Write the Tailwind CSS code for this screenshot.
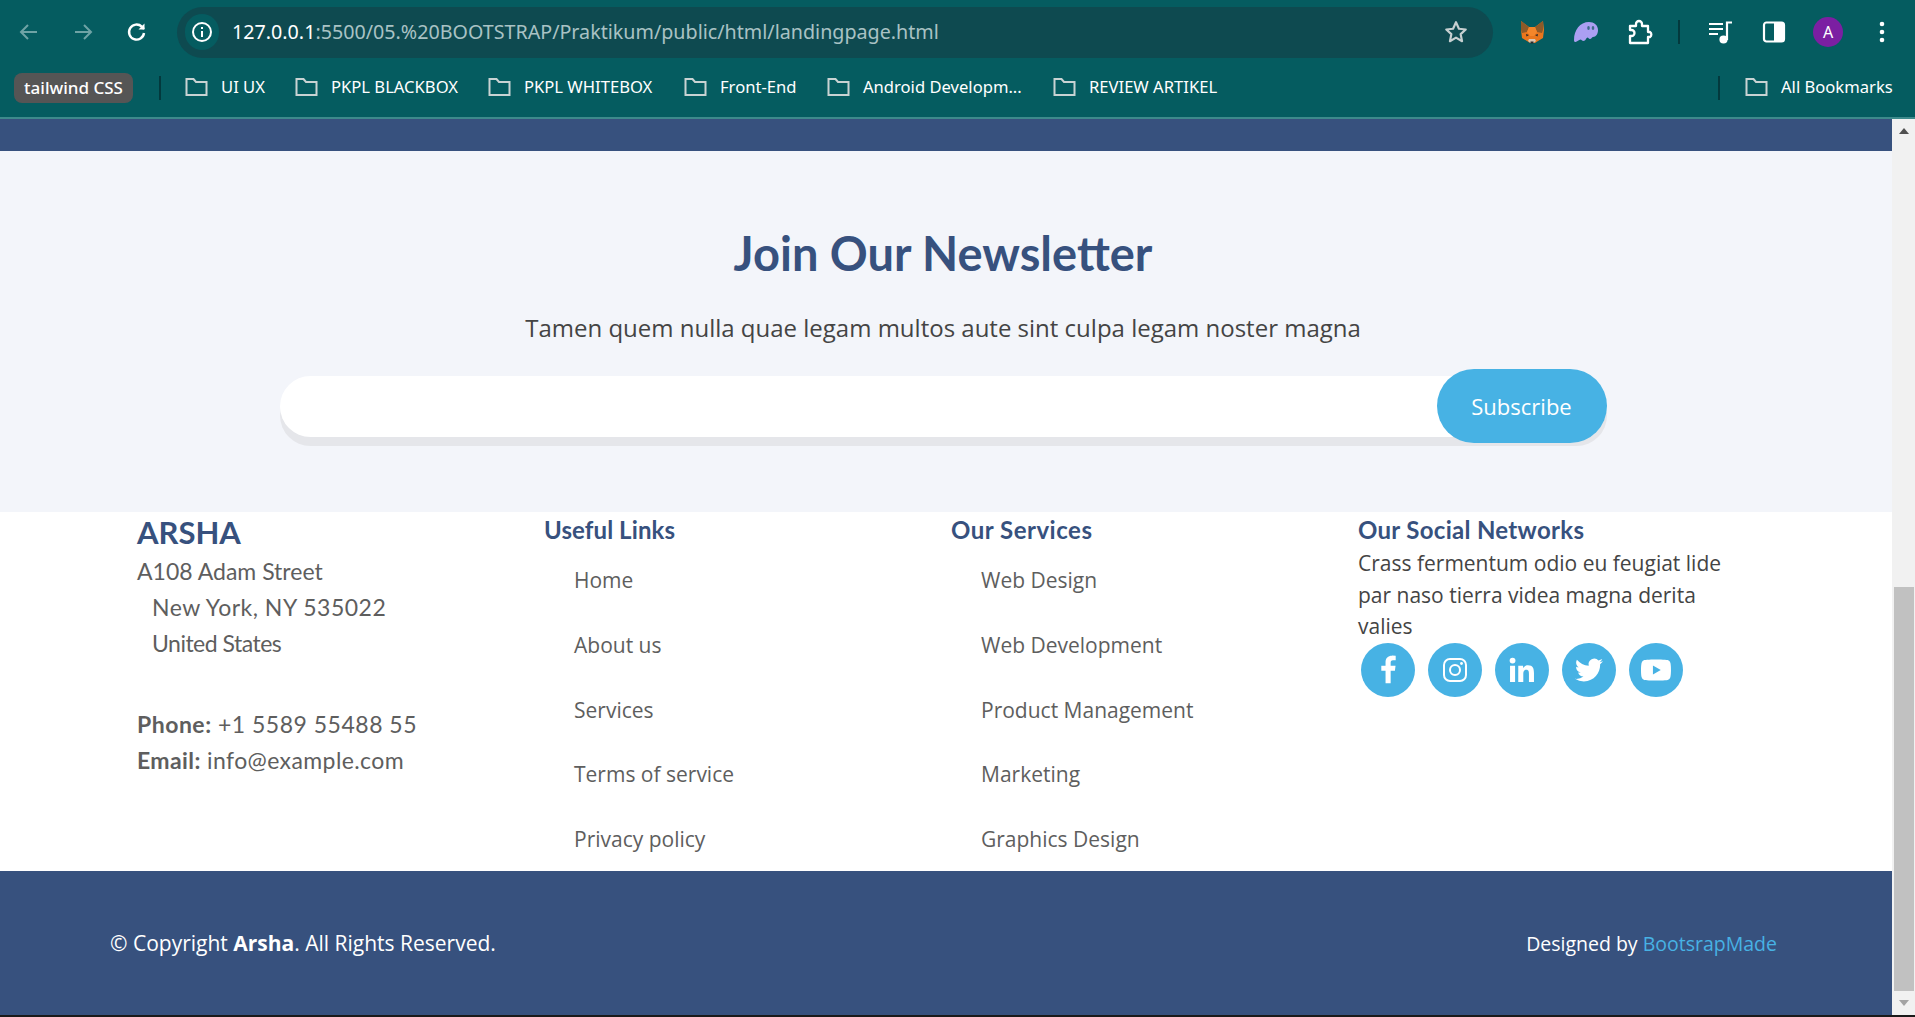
<!DOCTYPE html>
<html>
<head>
<meta charset="UTF-8">
<title>landingpage</title>
<script src="https://cdn.jsdelivr.net/npm/@tailwindcss/browser@4"></script>
</head>
<body class="bg-[#1a1a1a] font-['Open_Sans',sans-serif]">
<div class="h-[1015px] w-[1915px] flex flex-col overflow-hidden">

  <!-- browser chrome -->
  <div class="h-[119px] bg-[#055c60] border-b-2 border-[#3e8a8c] text-white font-['Noto_Sans',sans-serif] shrink-0">
    <div class="h-[64px] flex items-center pl-[2px]">
      <div class="w-[54px] flex justify-center text-[#6fa3a5]">
        <svg class="w-[24px] h-[24px]" viewBox="0 0 24 24" fill="none" stroke="currentColor" stroke-width="2"><path d="M20 12H5M11 5l-7 7 7 7"/></svg>
      </div>
      <div class="w-[54px] flex justify-center text-[#6fa3a5]">
        <svg class="w-[24px] h-[24px]" viewBox="0 0 24 24" fill="none" stroke="currentColor" stroke-width="2"><path d="M4 12h15M13 5l7 7-7 7"/></svg>
      </div>
      <div class="w-[54px] flex justify-center text-white">
        <svg class="w-[24px] h-[24px]" viewBox="0 0 24 24" fill="none" stroke="currentColor" stroke-width="2.4"><path d="M19 13a7.5 7.5 0 1 1-2.2-6.3L19 9"/><path d="M19.5 3.5V9.5H13.5" fill="currentColor" stroke="none"/></svg>
      </div>
      <div class="ml-[13px] w-[1316px] h-[51px] rounded-full bg-[#0e4a50] flex items-center pl-[8px] pr-[24px]">
        <div class="w-[34px] h-[36px] rounded-full bg-[#055c60] flex items-center justify-center">
          <svg class="w-[24px] h-[24px]" viewBox="0 0 24 24" fill="none" stroke="#fff" stroke-width="2"><circle cx="12" cy="12" r="9"/><path d="M12 11v6M12 7v2"/></svg>
        </div>
        <div class="ml-[13px] text-[19.7px] leading-none flex-1 whitespace-nowrap text-[#a9c2c4]"><span class="text-white">127.0.0.1</span>:5500/05.%20BOOTSTRAP/Praktikum/public/html/landingpage.html</div>
        <svg class="w-[26px] h-[26px]" viewBox="0 0 24 24" fill="none" stroke="#c6cfd0" stroke-width="2" stroke-linejoin="round"><path d="M12 3l2.700 6 6.300.7-4.700 4.300 1.300 6.500L12 17.200l-5.600 3.300 1.300-6.500L3 9.700 9.300 9z"/></svg>
      </div>
      <div class="ml-[12px] w-[54px] flex justify-center">
        <svg class="w-[24px] h-[24px]" viewBox="0 0 24 24">
          <path d="M1 1l8 6h6l8-6 1 9-1 8-5 3-3 2H10l-3-2-5-3-1-8z" fill="#e9761c"/>
          <path d="M1 1l8 6-2 5-5 1-1-3zM23 1l-8 6 2 5 5 1 1-3z" fill="#8f5a28"/>
          <path d="M7 12l2-5h6l2 5-3 4h-4z" fill="#f4862a"/>
          <path d="M9 19h6l1 2-2.500 2h-3L8 21z" fill="#d9c6b3"/>
          <path d="M10.500 21.500h3V23.500h-3z" fill="#2b2b2b"/>
          <path d="M6 14l3 1-2.500 1.500zM18 14l-3 1 2.500 1.500z" fill="#2b2b2b"/>
        </svg>
      </div>
      <div class="w-[54px] flex justify-center">
        <svg class="w-[26px] h-[26px]" viewBox="0 0 26 26"><path d="M1 21c0-10 6-18 15-18 5 0 9 3 9 8 0 4-2 7-5 7-1 0-1.500 2-3 2-1.400 0-1.500-1.500-2.500-1.500S12.500 22 10.500 22C9 22 8.500 20.500 7.500 20.500 6 20.500 4 23 2.500 23 1.500 23 1 22.500 1 21z" fill="#ab9ff2"/><ellipse cx="15.500" cy="9" rx="1.300" ry="2" fill="#3e6a8a"/><ellipse cx="20" cy="9" rx="1.300" ry="2" fill="#3e6a8a"/></svg>
      </div>
      <div class="w-[54px] flex justify-center">
        <svg class="w-[26px] h-[26px]" viewBox="0 0 26 26" fill="none" stroke="#fff" stroke-width="2.300" stroke-linejoin="round"><path d="M3 7h6V5a3 3 0 0 1 6 0v2h6v6h2a3 3 0 0 1 0 5h-2v6H3v-7h1.500a3 3 0 0 0 0-6H3z"/></svg>
      </div>
      <div class="w-[2px] h-[24px] ml-[11px] bg-[#03393d]"></div>
      <div class="ml-[14px] w-[54px] flex justify-center">
        <svg class="w-[26px] h-[26px]" viewBox="0 0 26 26" fill="none" stroke="#fff" stroke-width="2.200"><path d="M1 5h14M1 10h14M1 15h9"/><path d="M19 21V3.500h5"/><circle cx="15.500" cy="20.500" r="3" fill="#fff"/></svg>
      </div>
      <div class="w-[52px] flex justify-center">
        <svg class="w-[24px] h-[24px]" viewBox="0 0 24 24"><rect x="2" y="2.500" width="20" height="19" rx="2.500" fill="none" stroke="#fff" stroke-width="2.200"/><path d="M12 2.500h8a2 2 0 0 1 2 2v15a2 2 0 0 1-2 2h-8z" fill="#fff"/></svg>
      </div>
      <div class="w-[56px] flex justify-center">
        <div class="w-[30px] h-[30px] rounded-full bg-[#7b1fa2] flex items-center justify-center text-[16px] text-white">A</div>
      </div>
      <div class="w-[52px] flex justify-center">
        <svg class="w-[6px] h-[24px]" viewBox="0 0 6 24" fill="#fff"><circle cx="3" cy="4" r="2.300"/><circle cx="3" cy="12" r="2.300"/><circle cx="3" cy="20" r="2.300"/></svg>
      </div>
    </div>
    <div class="h-[53px] flex items-center pl-[14px] pb-[6px] text-[16.6px] whitespace-nowrap">
      <div class="w-[119px] h-[30px] rounded-[8px] bg-[#555555] flex items-center justify-center font-medium text-[17px]">tailwind CSS</div>
      <div class="ml-[26px] mr-[24px] w-[2px] h-[24px] bg-[#03393d]"></div>
      <div class="w-[110px] flex items-center gap-[13px]"><svg class="w-[23px] h-[20px]" viewBox="0 0 23 20" fill="none" stroke="#c9d3d3" stroke-width="2"><path d="M1.500 2h7l2.500 3h10.500v13h-20z"/></svg><span>UI UX</span></div>
      <div class="w-[193px] flex items-center gap-[13px]"><svg class="w-[23px] h-[20px]" viewBox="0 0 23 20" fill="none" stroke="#c9d3d3" stroke-width="2"><path d="M1.500 2h7l2.500 3h10.500v13h-20z"/></svg><span>PKPL BLACKBOX</span></div>
      <div class="w-[196px] flex items-center gap-[13px]"><svg class="w-[23px] h-[20px]" viewBox="0 0 23 20" fill="none" stroke="#c9d3d3" stroke-width="2"><path d="M1.500 2h7l2.500 3h10.500v13h-20z"/></svg><span>PKPL WHITEBOX</span></div>
      <div class="w-[143px] flex items-center gap-[13px]"><svg class="w-[23px] h-[20px]" viewBox="0 0 23 20" fill="none" stroke="#c9d3d3" stroke-width="2"><path d="M1.500 2h7l2.500 3h10.500v13h-20z"/></svg><span>Front-End</span></div>
      <div class="w-[226px] flex items-center gap-[13px]"><svg class="w-[23px] h-[20px]" viewBox="0 0 23 20" fill="none" stroke="#c9d3d3" stroke-width="2"><path d="M1.500 2h7l2.500 3h10.500v13h-20z"/></svg><span>Android Developm...</span></div>
      <div class="flex items-center gap-[13px]"><svg class="w-[23px] h-[20px]" viewBox="0 0 23 20" fill="none" stroke="#c9d3d3" stroke-width="2"><path d="M1.500 2h7l2.500 3h10.500v13h-20z"/></svg><span>REVIEW ARTIKEL</span></div>
      <div class="ml-auto w-[2px] h-[24px] bg-[#03393d]"></div>
      <div class="w-[195px] flex items-center gap-[13px] pl-[25px]"><svg class="w-[23px] h-[20px]" viewBox="0 0 23 20" fill="none" stroke="#c9d3d3" stroke-width="2"><path d="M1.500 2h7l2.500 3h10.500v13h-20z"/></svg><span>All Bookmarks</span></div>
    </div>
  </div>

  <div class="flex-1 flex min-h-0">
    <!-- page -->
    <div class="flex-1 flex flex-col min-w-0">
      <div class="h-[32px] bg-[#37517e]"></div>

      <section class="h-[361px] bg-[#f3f5fa] flex flex-col items-center pt-[66px] pr-[6px]">
        <h2 class="font-['Lato',sans-serif] font-bold text-[47px] leading-[72px] text-[#37517e] whitespace-nowrap">Join Our Newsletter</h2>
        <p class="mt-[21px] text-[24px] leading-[36px] text-[#444444]">Tamen quem nulla quae legam multos aute sint culpa legam noster magna</p>
        <form class="relative mt-[30px] w-[1327px] h-[61px] rounded-full bg-white shadow-[0_9px_0_#e5e6ea]">
          <button type="button" class="absolute right-0 top-[-7px] w-[170px] h-[74px] rounded-full bg-[#47b2e4] text-white text-[22px]">Subscribe</button>
        </form>
      </section>

      <section class="h-[359px] bg-white grid grid-cols-[407px_407px_407px_375px] pl-[137px]">
        <div class="font-['Lato',sans-serif] text-[23px] leading-[36px] text-[#5e5e5e]">
          <h3 class="font-bold text-[31px] leading-[36px] pt-[2px] text-[#37517e]">ARSHA</h3>
          <p class="mt-[3px]">A108 Adam Street<br><span class="pl-[15px] tracking-[0.5px]">New York, NY 535022</span><br><span class="pl-[15px] tracking-[-0.5px]">United States</span></p>
          <p class="mt-[45px]"><span class="tracking-[0.5px]"><b>Phone:</b> +1 5589 55488 55</span><br><span class="tracking-[0.4px]"><b>Email:</b> info@example.com</span></p>
        </div>
        <div>
          <h4 class="font-['Lato',sans-serif] font-bold text-[24px] leading-[36px] tracking-[0.1px] text-[#37517e]">Useful Links</h4>
          <ul class="pl-[30px] text-[21px] leading-[32px] text-[#5e5e5e] mt-[16px] flex flex-col gap-[32.800px]">
            <li>Home</li><li>About us</li><li>Services</li><li>Terms of service</li><li>Privacy policy</li>
          </ul>
        </div>
        <div>
          <h4 class="font-['Lato',sans-serif] font-bold text-[24px] leading-[36px] tracking-[0.5px] text-[#37517e]">Our Services</h4>
          <ul class="pl-[30px] text-[21px] leading-[32px] text-[#5e5e5e] mt-[16px] flex flex-col gap-[32.800px]">
            <li>Web Design</li><li>Web Development</li><li>Product Management</li><li>Marketing</li><li>Graphics Design</li>
          </ul>
        </div>
        <div>
          <h4 class="font-['Lato',sans-serif] font-bold text-[24px] leading-[36px] tracking-[0.3px] text-[#37517e]">Our Social Networks</h4>
          <p class="text-[21px] leading-[31.500px] text-[#444444]">Crass fermentum odio eu feugiat lide par naso tierra videa magna derita valies</p>
          <div class="flex gap-[13px] pl-[3px]">
            <a class="w-[54px] h-[54px] rounded-full bg-[#47b2e4] flex items-center justify-center"><svg class="w-[37px] h-[37px]" viewBox="0 0 24 24" fill="#fff"><path d="M13.397 20.997v-8.196h2.765l.411-3.209h-3.176V7.548c0-.926.258-1.560 1.587-1.560h1.684V3.127A22.336 22.336 0 0 0 14.201 3c-2.444 0-4.122 1.492-4.122 4.231v2.355H7.332v3.209h2.753v8.202h3.312z"/></svg></a>
            <a class="w-[54px] h-[54px] rounded-full bg-[#47b2e4] flex items-center justify-center"><svg class="w-[26px] h-[26px]" viewBox="0 0 26 26" fill="none" stroke="#fff" stroke-width="2"><rect x="2" y="2" width="22" height="22" rx="6"/><circle cx="13" cy="13" r="5"/><circle cx="19.500" cy="6.500" r="1.400" fill="#fff" stroke="none"/></svg></a>
            <a class="w-[54px] h-[54px] rounded-full bg-[#47b2e4] flex items-center justify-center"><svg class="w-[34px] h-[34px]" viewBox="0 0 24 24" fill="#fff"><path d="M20.452 20.452h-3.554v-5.569c0-1.328-.027-3.037-1.852-3.037-1.853 0-2.136 1.445-2.136 2.939v5.667H9.356V9h3.414v1.561h.046c.477-.9 1.637-1.850 3.370-1.850 3.601 0 4.267 2.370 4.267 5.455v6.286zM5.337 7.433a2.062 2.062 0 1 1 0-4.124 2.062 2.062 0 0 1 0 4.124zM7.119 20.452H3.555V9h3.564v11.452z"/></svg></a>
            <a class="w-[54px] h-[54px] rounded-full bg-[#47b2e4] flex items-center justify-center"><svg class="w-[28px] h-[28px]" viewBox="0 0 24 24" fill="#fff"><path d="M23.953 4.570a10 10 0 01-2.825.775 4.958 4.958 0 002.163-2.723c-.951.555-2.005.959-3.127 1.184a4.920 4.920 0 00-8.384 4.482C7.690 8.095 4.067 6.130 1.640 3.162a4.822 4.822 0 00-.666 2.475c0 1.710.870 3.213 2.188 4.096a4.904 4.904 0 01-2.228-.616v.060a4.923 4.923 0 003.946 4.827 4.996 4.996 0 01-2.212.085 4.936 4.936 0 004.604 3.417 9.867 9.867 0 01-6.102 2.105c-.390 0-.779-.023-1.170-.067a13.995 13.995 0 007.557 2.209c9.053 0 13.998-7.496 13.998-13.985 0-.210 0-.420-.015-.630A9.935 9.935 0 0024 4.590z"/></svg></a>
            <a class="w-[54px] h-[54px] rounded-full bg-[#47b2e4] flex items-center justify-center"><svg class="w-[30px] h-[30px]" viewBox="0 0 24 24" fill="#fff"><path d="M23.498 6.186a3.016 3.016 0 00-2.122-2.136C19.505 3.545 12 3.545 12 3.545s-7.505 0-9.377.505A3.017 3.017 0 00.502 6.186C0 8.070 0 12 0 12s0 3.930.502 5.814a3.016 3.016 0 002.122 2.136c1.871.505 9.376.505 9.376.505s7.505 0 9.377-.505a3.015 3.015 0 002.122-2.136C24 15.930 24 12 24 12s0-3.930-.502-5.814zM9.545 15.568V8.432L15.818 12l-6.273 3.568z"/></svg></a>
          </div>
        </div>
      </section>

      <footer class="flex-1 bg-[#37517e] text-white flex items-center justify-between pl-[110px] pr-[115px] pt-[2px]">
        <div class="text-[21px]">© Copyright <b>Arsha</b>. All Rights Reserved.</div>
        <div class="text-[19.500px]">Designed by <a class="text-[#47b2e4]">BootsrapMade</a></div>
      </footer>
    </div>

    <!-- scrollbar -->
    <div class="w-[23px] bg-[#f1f1f1] flex flex-col items-center shrink-0">
      <div class="h-[24px] flex items-center justify-center"><div class="w-0 h-0 border-x-[5px] border-x-transparent border-b-[6px] border-b-[#505050]"></div></div>
      <div class="flex-1"></div>
      <div class="w-[20px] h-[404px] bg-[#c1c1c1]"></div>
      <div class="h-[24px] flex items-center justify-center"><div class="w-0 h-0 border-x-[5px] border-x-transparent border-t-[6px] border-t-[#a3a3a3]"></div></div>
    </div>
  </div>
</div>
</body>
</html>
